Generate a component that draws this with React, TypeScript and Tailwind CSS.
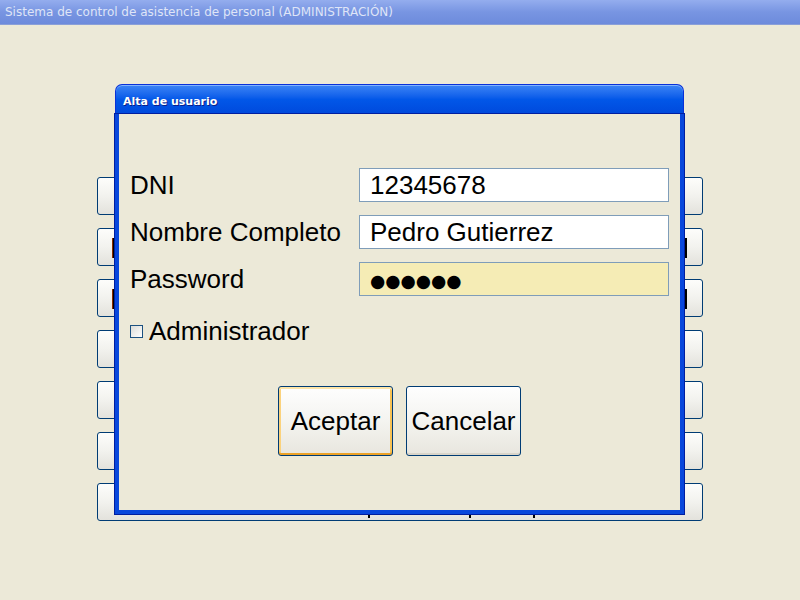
import React from "react";

const rows = [0, 1, 2, 3, 4, 5, 6];

function Field({ label, value, yellow }: { label: string; value?: string; yellow?: boolean }) {
    return (
        <div className="flex items-center h-[34px]">
            <span className="w-[229px] whitespace-nowrap">{label}</span>
            <div
                className={`w-[310px] h-[34px] border border-[#7f9db9] flex items-center pl-[10px] ${yellow ? "bg-[#f5ecb5]" : "bg-white"}`}
            >
                {value ? (
                    <span className="leading-none">{value}</span>
                ) : (
                    <span className="font-['DejaVu_Sans',sans-serif] text-[17.5px] leading-none pt-[6px]">●●●●●●</span>
                )}
            </div>
        </div>
    );
}

export default function App() {
    return (
        <div className="relative w-[800px] h-[600px] bg-[#ece9d8] overflow-hidden font-['Liberation_Sans',Arial,sans-serif]">
            {/* Main window title bar (inactive) */}
            <div className="h-[25px] bg-gradient-to-b from-[#94adee] via-[#7895e2] to-[#6d8bdc] border-b border-[#8a9fd8] flex items-center pl-[5px]">
                <span className="font-['DejaVu_Sans',sans-serif] text-[12px] text-[#dfe5f7]">
                    Sistema de control de asistencia de personal (ADMINISTRACIÓN)
                </span>
            </div>

            {/* Background buttons behind the dialog */}
            <div className="flex flex-col gap-[13px] pt-[152px] pl-[97px]">
                {rows.map(i => (
                    <div
                        key={i}
                        className="relative w-[606px] h-[38px] rounded-[3px] border border-[#003c74] bg-gradient-to-b from-[#fdfdfb] via-[#f2f2ee] to-[#e3e2dc]"
                    >
                        {(i === 1 || i === 2) && (
                            <>
                                <span className="absolute left-[14px] top-[9px] w-[3px] h-[20px] bg-black border-l border-[#8a2a00]" />
                                <span className="absolute right-[15px] top-[9px] w-[4px] h-[20px] border-[2px] border-l-0 border-black bg-[#f6b04a]" />
                            </>
                        )}
                        {i === 6 && (
                            <>
                                <span className="absolute left-[270px] top-[31px] w-[2px] h-[3px] bg-black" />
                                <span className="absolute left-[371px] top-[31px] w-[2px] h-[3px] bg-black" />
                                <span className="absolute left-[435px] top-[31px] w-[2px] h-[3px] bg-black" />
                            </>
                        )}
                    </div>
                ))}
            </div>

            {/* Dialog: Alta de usuario */}
            <div className="absolute left-[115px] top-[84px] w-[569px] h-[430px] flex flex-col">
                <div className="h-[30px] rounded-t-[7px] border border-b-0 border-[#0831d9] bg-gradient-to-b from-[#3b84f5] via-[#0257e8] to-[#0049dc] flex items-center pl-[7px] pt-[5px] shadow-[inset_0_1px_0_#7fb2ff]">
                    <span className="font-['DejaVu_Sans',sans-serif] font-bold text-[11px] text-white [text-shadow:1px_1px_0_#0a1e8a]">
                        Alta de usuario
                    </span>
                </div>
                <div className="flex-1 border-x-4 border-b-4 border-[#0847dc] shadow-[0_0_0_1px_#001ea0] bg-[#ece9d8] text-[26px] text-black flex flex-col pt-[54px] pl-[11px]">
                    <div className="flex flex-col gap-[13px]">
                        <Field label="DNI" value="12345678" />
                        <Field label="Nombre Completo" value="Pedro Gutierrez" />
                        <Field label="Password" yellow />
                    </div>
                    <div className="flex items-center h-[34px] mt-[18px] gap-[6px]">
                        <span className="w-[13px] h-[13px] border border-[#1c5180] bg-gradient-to-br from-[#dcdcd7] to-white" />
                        <span>Administrador</span>
                    </div>
                    <div className="flex justify-center gap-[13px] mt-[38px] pr-[11px]">
                        <button className="w-[115px] h-[70px] rounded-[3px] border border-[#003c74] bg-gradient-to-b from-[#fefefe] via-[#f4f4f0] to-[#e8e6de] shadow-[inset_0_2px_0_#fde5a8,inset_0_-2px_0_#eca227,inset_2px_0_0_#fbd27c,inset_-2px_0_0_#f8c252]">
                            Aceptar
                        </button>
                        <button className="w-[115px] h-[70px] rounded-[3px] border border-[#003c74] bg-gradient-to-b from-[#fefefe] via-[#f4f4f0] to-[#e8e6de] shadow-[inset_0_-2px_0_#d9d5ca]">
                            Cancelar
                        </button>
                    </div>
                </div>
            </div>
        </div>
    );
}
